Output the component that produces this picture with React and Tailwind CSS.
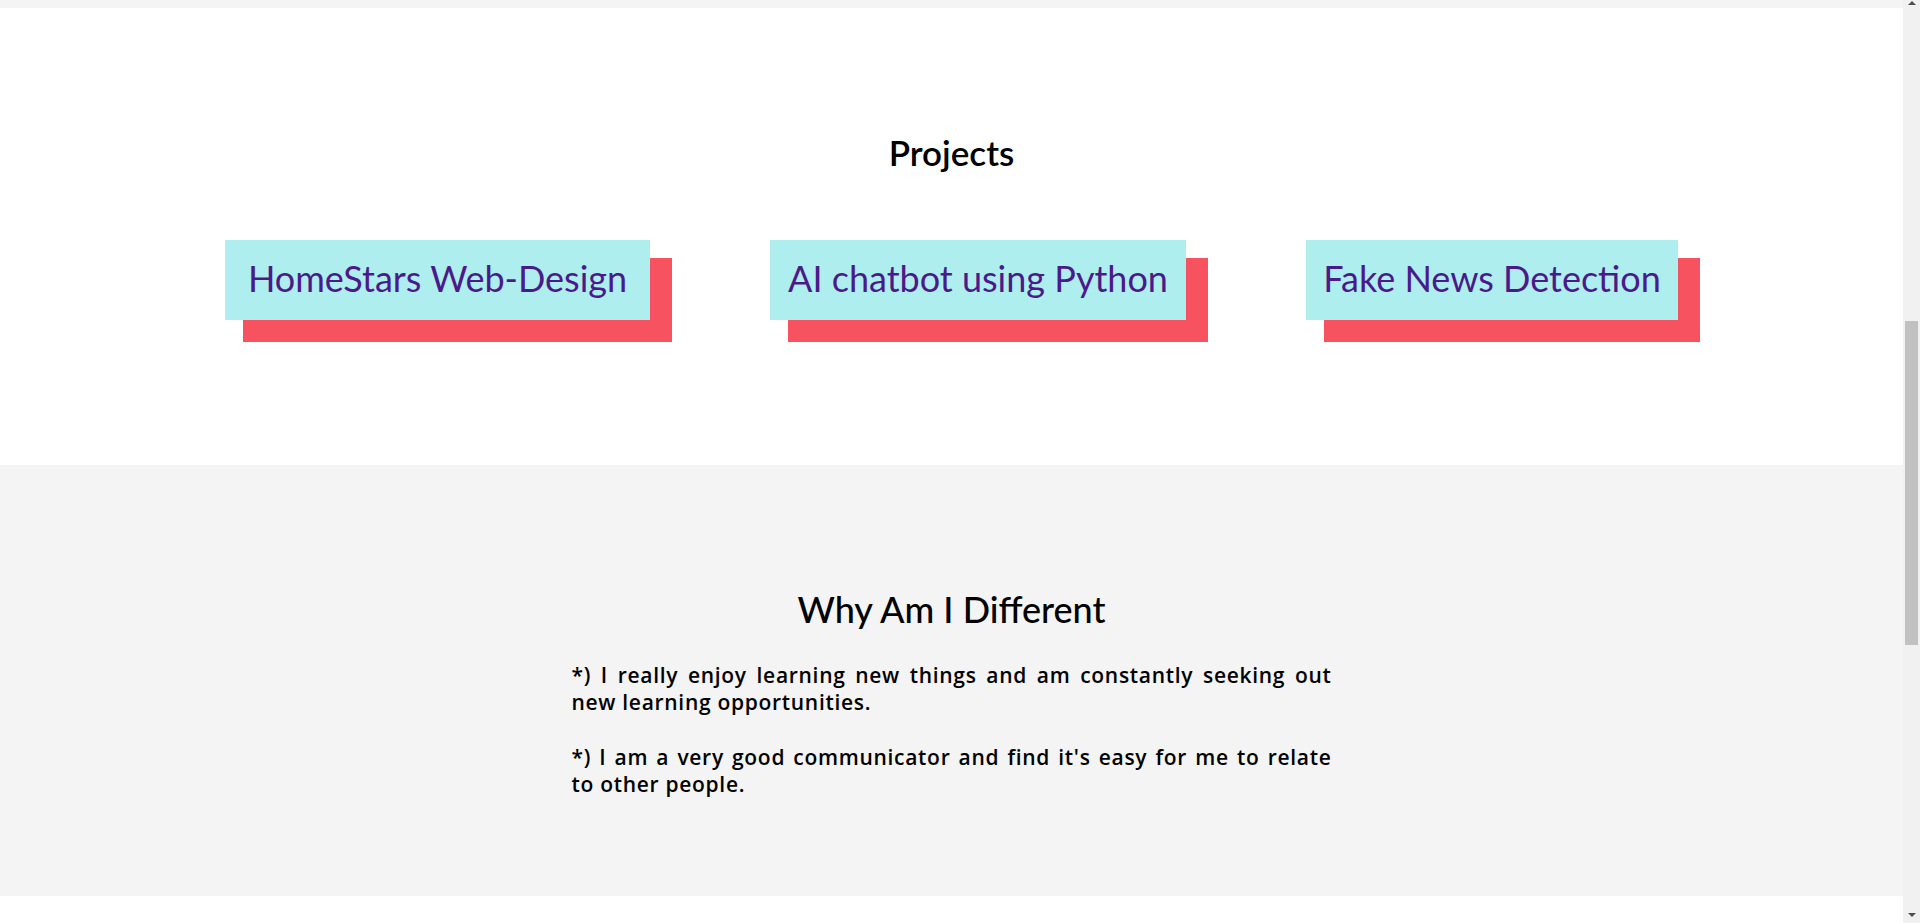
import React from 'react';

const projects = [
    { title: 'HomeStars Web-Design', width: 'w-[425px]' },
    { title: 'AI chatbot using Python', width: 'w-[416px]' },
    { title: 'Fake News Detection', width: 'w-[372px]' },
];

// each point is laid out as it wraps in the original page
const points = [
    ['*) I really enjoy learning new things and am constantly seeking out', 'new learning opportunities.'],
    ["*) I am a very good communicator and find it's easy for me to relate", 'to other people.'],
];

const ProjectCard = ({ title, width }) => (
    <div
        className={`${width} h-[80px] pb-[5px] flex items-center justify-center bg-[#afeeee] shadow-[20px_20px_0_2px_#f7525f] text-[36px] leading-[48px] text-[#4b1a8a] whitespace-nowrap`}
    >
        {title}
    </div>
);

const Scrollbar = () => (
    <div className="w-[17px] h-full flex flex-col bg-[#f1f1f1]">
        <div className="h-[17px] flex items-start justify-center pt-[1px]">
            <div className="w-0 h-0 border-l-[4px] border-r-[4px] border-b-[4px] border-l-transparent border-r-transparent border-b-[#505050]" />
        </div>
        <div className="h-[304px]" />
        <div className="h-[324px] mx-[2px] bg-[#c1c1c1]" />
        <div className="flex-1" />
        <div className="h-[17px] flex items-center justify-center">
            <div className="w-0 h-0 border-l-[4px] border-r-[4px] border-t-[4px] border-l-transparent border-r-transparent border-t-[#505050]" />
        </div>
    </div>
);

const App = () => {
    return (
        <div className="w-[1920px] h-[923px] flex overflow-hidden bg-white font-['Lato','Noto_Sans',sans-serif] text-black">
            <div className="flex-1 flex flex-col">
                {/* tail of previous section */}
                <div className="h-[8px] bg-[#f4f4f4]" />

                {/* Projects */}
                <section className="h-[457px] pt-[120px] flex flex-col items-center bg-white">
                    <h2 className="text-[35px] leading-[48px] font-semibold">Projects</h2>
                    <div className="mt-[64px] flex justify-center gap-[120px]">
                        {projects.map((p) => (
                            <ProjectCard key={p.title} title={p.title} width={p.width} />
                        ))}
                    </div>
                </section>

                {/* Why Am I Different */}
                <section className="h-[431px] pt-[120px] flex flex-col items-center bg-[#f4f4f4]">
                    <h2 className="text-[36px] leading-[48px] font-medium">Why Am I Different</h2>
                    <div className="w-[760px] mt-[29px] font-['Open_Sans','Noto_Sans',sans-serif] text-[21px] leading-[27px] font-semibold tracking-[0.7px] flex flex-col gap-[28px]">
                        {points.map(([first, rest]) => (
                            <p key={first}>
                                <span className="block whitespace-nowrap text-justify [text-align-last:justify]">{first}</span>
                                <span className="block">{rest}</span>
                            </p>
                        ))}
                    </div>
                </section>

                <div className="flex-1 bg-white" />
            </div>
            <Scrollbar />
        </div>
    );
};

export default App;
